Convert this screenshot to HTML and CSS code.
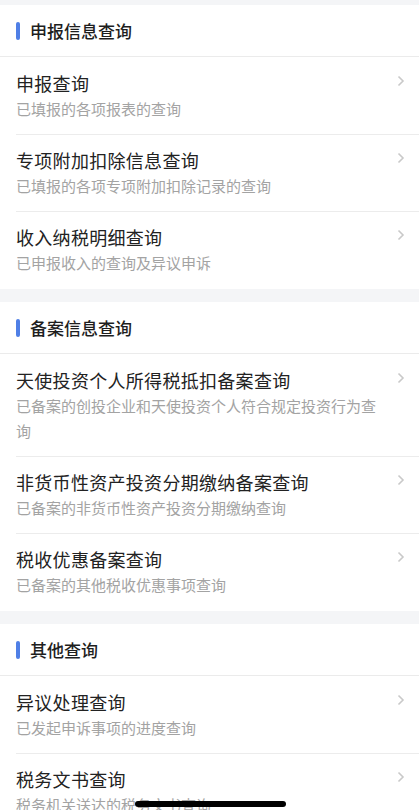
FILE: index.html
```html
<!DOCTYPE html>
<html lang="zh">
<head>
<meta charset="utf-8">
<link rel="stylesheet" href="styles.css">
</head>
<body>
<div class="page">
  <section class="group">
    <div class="group-head"><span class="bar"></span><span class="head-title">申报信息查询</span></div>
    <a class="item"><div class="text"><div class="title">申报查询</div><div class="sub">已填报的各项报表的查询</div></div><svg class="chev" viewBox="0 0 8 12"><path d="M1.5 1.5 L6 6 L1.5 10.5"/></svg></a>
    <a class="item"><div class="text"><div class="title">专项附加扣除信息查询</div><div class="sub">已填报的各项专项附加扣除记录的查询</div></div><svg class="chev" viewBox="0 0 8 12"><path d="M1.5 1.5 L6 6 L1.5 10.5"/></svg></a>
    <a class="item"><div class="text"><div class="title">收入纳税明细查询</div><div class="sub">已申报收入的查询及异议申诉</div></div><svg class="chev" viewBox="0 0 8 12"><path d="M1.5 1.5 L6 6 L1.5 10.5"/></svg></a>
  </section>
  <section class="group">
    <div class="group-head"><span class="bar"></span><span class="head-title">备案信息查询</span></div>
    <a class="item"><div class="text"><div class="title">天使投资个人所得税抵扣备案查询</div><div class="sub">已备案的创投企业和天使投资个人符合规定投资行为查询</div></div><svg class="chev" viewBox="0 0 8 12"><path d="M1.5 1.5 L6 6 L1.5 10.5"/></svg></a>
    <a class="item"><div class="text"><div class="title">非货币性资产投资分期缴纳备案查询</div><div class="sub">已备案的非货币性资产投资分期缴纳查询</div></div><svg class="chev" viewBox="0 0 8 12"><path d="M1.5 1.5 L6 6 L1.5 10.5"/></svg></a>
    <a class="item"><div class="text"><div class="title">税收优惠备案查询</div><div class="sub">已备案的其他税收优惠事项查询</div></div><svg class="chev" viewBox="0 0 8 12"><path d="M1.5 1.5 L6 6 L1.5 10.5"/></svg></a>
  </section>
  <section class="group">
    <div class="group-head"><span class="bar"></span><span class="head-title">其他查询</span></div>
    <a class="item"><div class="text"><div class="title">异议处理查询</div><div class="sub">已发起申诉事项的进度查询</div></div><svg class="chev" viewBox="0 0 8 12"><path d="M1.5 1.5 L6 6 L1.5 10.5"/></svg></a>
    <a class="item"><div class="text"><div class="title">税务文书查询</div><div class="sub">税务机关送达的税务文书查询</div></div><svg class="chev" viewBox="0 0 8 12"><path d="M1.5 1.5 L6 6 L1.5 10.5"/></svg></a>
  </section>
</div>
<div class="home-indicator"></div>
</body>
</html>
```

FILE: styles.css
```css
html, body {
  margin: 0;
  padding: 0;
  background: #f4f5f7;
}
body {
  font-family: "Noto Sans CJK SC", "Noto Sans", sans-serif;
  width: 419px;
  height: 810px;
  overflow: hidden;
}
.page {
  padding-top: 5px;
  display: flex;
  flex-direction: column;
  gap: 13px;
}
.group {
  background: #fff;
  display: flex;
  flex-direction: column;
}
.group-head {
  height: 51px;
  display: flex;
  align-items: center;
  padding-left: 16px;
  border-bottom: 1px solid #ebebeb;
}
.bar {
  width: 4px;
  height: 18px;
  border-radius: 2px;
  background: #4f7fe6;
  margin-right: 10px;
}
.head-title {
  font-size: 17px;
  font-weight: 500;
  color: #1e1e1e;
}
.item {
  display: flex;
  align-items: flex-start;
  margin-left: 16px;
  padding: 12px 14px 13px 0;
  border-top: 1px solid #ececec;
  text-decoration: none;
}
.group-head + .item {
  border-top: none;
  padding-top: 13px;
}
.item:last-child {
  padding-bottom: 14px;
}
.text {
  flex: 1;
  max-width: 370px;
}
.title {
  font-size: 18px;
  line-height: 26px;
  color: #222;
  letter-spacing: 0.3px;
}
.sub {
  font-size: 15px;
  line-height: 25px;
  color: #a3a3a3;
}
.chev {
  width: 8px;
  height: 12px;
  margin-top: 5px;
  margin-left: auto;
  fill: none;
  stroke: #c9c9c9;
  stroke-width: 1.6;
  flex: none;
}
.home-indicator {
  position: fixed;
  left: 135px;
  top: 801px;
  width: 151px;
  height: 6px;
  border-radius: 3px;
  background: #000;
}
```
